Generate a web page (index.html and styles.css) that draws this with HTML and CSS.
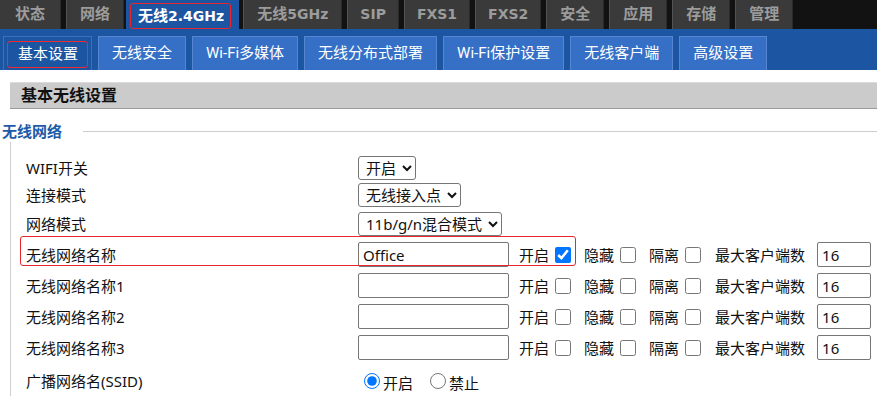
FILE: index.html
```html
<!DOCTYPE html>
<html lang="zh-CN">
<head>
<meta charset="utf-8">
<title>无线2.4GHz - 基本设置</title>
<link rel="stylesheet" href="styles.css">
</head>
<body>
<nav class="topbar">
  <span class="ttab">状态</span>
  <span class="ttab">网络</span>
  <span class="ttab active"><span class="ttab-inner">无线<span class="lat">2.4GHz</span></span></span>
  <span class="ttab">无线<span class="lat">5GHz</span></span>
  <span class="ttab latin"><span class="lat">SIP</span></span>
  <span class="ttab latin"><span class="lat">FXS1</span></span>
  <span class="ttab latin"><span class="lat">FXS2</span></span>
  <span class="ttab">安全</span>
  <span class="ttab">应用</span>
  <span class="ttab">存储</span>
  <span class="ttab">管理</span>
</nav>
<nav class="subbar">
  <span class="stab active"><span class="stab-inner">基本设置</span></span>
  <span class="stab">无线安全</span>
  <span class="stab">Wi-Fi多媒体</span>
  <span class="stab">无线分布式部署</span>
  <span class="stab">Wi-Fi保护设置</span>
  <span class="stab">无线客户端</span>
  <span class="stab">高级设置</span>
</nav>
<main class="content">
  <div class="section-head">基本无线设置</div>
  <div class="legend-row"><span class="legend">无线网络</span><span class="legend-line"></span></div>
  <div class="fieldset">
    <div class="row short">
      <label class="lbl">WIFI开关</label>
      <select class="sel"><option>开启</option><option>关闭</option></select>
    </div>
    <div class="row short">
      <label class="lbl">连接模式</label>
      <select class="sel"><option>无线接入点</option></select>
    </div>
    <div class="row">
      <label class="lbl">网络模式</label>
      <select class="sel"><option>11b/g/n混合模式</option></select>
    </div>
    <div class="row">
      <span class="highlight"></span>
      <label class="lbl">无线网络名称</label>
      <input class="txt" type="text" value="Office">
      <span class="opt first">开启</span><input class="cb" type="checkbox" checked>
      <span class="opt">隐藏</span><input class="cb" type="checkbox">
      <span class="opt">隔离</span><input class="cb" type="checkbox">
      <span class="opt max">最大客户端数</span><input class="num" type="text" value="16">
    </div>
    <div class="row">
      <label class="lbl">无线网络名称1</label>
      <input class="txt" type="text" value="">
      <span class="opt first">开启</span><input class="cb" type="checkbox">
      <span class="opt">隐藏</span><input class="cb" type="checkbox">
      <span class="opt">隔离</span><input class="cb" type="checkbox">
      <span class="opt max">最大客户端数</span><input class="num" type="text" value="16">
    </div>
    <div class="row">
      <label class="lbl">无线网络名称2</label>
      <input class="txt" type="text" value="">
      <span class="opt first">开启</span><input class="cb" type="checkbox">
      <span class="opt">隐藏</span><input class="cb" type="checkbox">
      <span class="opt">隔离</span><input class="cb" type="checkbox">
      <span class="opt max">最大客户端数</span><input class="num" type="text" value="16">
    </div>
    <div class="row">
      <label class="lbl">无线网络名称3</label>
      <input class="txt" type="text" value="">
      <span class="opt first">开启</span><input class="cb" type="checkbox">
      <span class="opt">隐藏</span><input class="cb" type="checkbox">
      <span class="opt">隔离</span><input class="cb" type="checkbox">
      <span class="opt max">最大客户端数</span><input class="num" type="text" value="16">
    </div>
    <div class="row tall">
      <label class="lbl">广播网络名(SSID)</label>
      <input class="rd" type="radio" name="ssid" checked><span class="rtxt">开启</span>
      <input class="rd second" type="radio" name="ssid"><span class="rtxt">禁止</span>
    </div>
  </div>
</main>
</body>
</html>
```
FILE: styles.css
```css
* { box-sizing: border-box; }
html, body { margin: 0; padding: 0; background: #fff; }
body {
  font-family: "Noto Sans", "Noto Sans CJK SC", sans-serif;
  font-size: 15px;
  color: #111;
  overflow: hidden;
}

/* top tabs */
.topbar {
  display: flex;
  height: 29px;
  background: #121212;
  gap: 5px;
}
.ttab {
  display: block;
  height: 29px;
  padding: 0 13px;
  background: #3a3a3a;
  border-left: 1px solid #525252;
  border-right: 1px solid #2a2a2a;
  color: #9c9c9c;
  font-family: "DejaVu Sans", "Noto Sans CJK SC", sans-serif;
  font-weight: bold;
  font-size: 15px;
  line-height: 29px;
  white-space: nowrap;
}
.ttab.latin { padding: 0 12px; }
.ttab .lat { font-size: 14px; }
.ttab:first-child { padding: 0 15px; border-left: none; }
.ttab.active {
  background: #1c55a1;
  border: none;
  padding: 3px 8px 0 4px;
  margin-left: -3px;
  margin-right: -1px;
}
.ttab-inner {
  display: block;
  height: 26px;
  padding: 0 6px 0 7px;
  border: 1px solid #e8262b;
  border-radius: 3px;
  color: #fff;
  line-height: 24px;
}

/* sub tabs */
.subbar {
  display: flex;
  align-items: flex-end;
  gap: 6px;
  height: 41px;
  padding-left: 3px;
  background: #1c55a1;
}
.stab {
  display: block;
  height: 34px;
  padding: 0 13px;
  background: #3570c6;
  border: 1px solid #5686d0;
  border-bottom: none;
  color: #fff;
  font-family: "Roboto", "Noto Sans CJK SC", sans-serif;
  font-size: 15px;
  line-height: 33px;
  white-space: nowrap;
}
.stab.active {
  display: flex;
  align-items: flex-start;
  background: #1c55a1;
  border-color: #3d70bb;
  padding: 4px 3px 0 3px;
}
.stab-inner {
  display: block;
  height: 27px;
  padding: 0 9px 0 10px;
  border: 1px solid #f02a2f;
  border-radius: 3px;
  line-height: 25px;
}

/* content */
.content { padding-top: 12px; }
.section-head {
  margin-left: 10px;
  height: 27px;
  padding-left: 11px;
  background: #cbcbcb;
  border-top: 1px solid #dcdcdc;
  border-bottom: 1px solid #9a9a9a;
  font-size: 16px;
  font-weight: 600;
  line-height: 25px;
  color: #111;
}
.legend-row {
  display: flex;
  align-items: center;
  height: 22px;
  margin-top: 11px;
  padding-left: 2px;
}
.legend {
  color: #1f5aa6;
  font-weight: bold;
  font-size: 15px;
  line-height: 20px;
}
.legend-line {
  flex: 1;
  height: 1px;
  margin-left: 21px;
  background: #cfcfcf;
}
.fieldset {
  margin-left: 10px;
  border-left: 1px solid #cfcfcf;
  padding-top: 12px;
  padding-left: 15px;
  height: 260px;
}
.row {
  position: relative;
  display: flex;
  align-items: center;
  height: 31px;
}
.row.short { height: 27px; }
.row.tall { height: 35px; }
.lbl {
  width: 332px;
  flex: none;
  font-size: 15px;
  line-height: 20px;
  color: #111;
}
.sel {
  height: 24px;
  font-family: "Noto Sans", "Noto Sans CJK SC", sans-serif;
  font-size: 15px;
  color: #111;
  background: #fff;
  border: 1px solid #767676;
  border-radius: 3px;
  padding: 0 2px 0 3px;
}
.txt {
  width: 151px;
  height: 25px;
  flex: none;
  border: 1px solid #767676;
  border-radius: 2px;
  padding: 0 4px;
  font-family: "Noto Sans", "Noto Sans CJK SC", sans-serif;
  font-size: 15px;
  color: #111;
}
.num {
  width: 54px;
  height: 25px;
  flex: none;
  margin-left: 12px;
  border: 1px solid #767676;
  border-radius: 2px;
  padding: 0 4px;
  font-family: "Noto Sans", "Noto Sans CJK SC", sans-serif;
  font-size: 15px;
  color: #111;
}
.opt {
  font-size: 15px;
  line-height: 20px;
  margin-left: 13px;
  white-space: nowrap;
}
.opt.first { margin-left: 10px; }
.opt.max { margin-left: 14px; }
.cb {
  width: 16px;
  height: 16px;
  margin: 0 0 0 6px;
  flex: none;
}
.rd {
  width: 16px;
  height: 16px;
  margin: 0 3px 0 6px;
  flex: none;
}
.rd.second { margin-left: 17px; }
.rtxt { font-size: 15px; line-height: 20px; margin-top: 4px; }
.highlight {
  position: absolute;
  left: -6px;
  top: -3px;
  width: 556px;
  height: 30px;
  border: 1px solid #e8262b;
  border-radius: 3px;
  pointer-events: none;
}
```
